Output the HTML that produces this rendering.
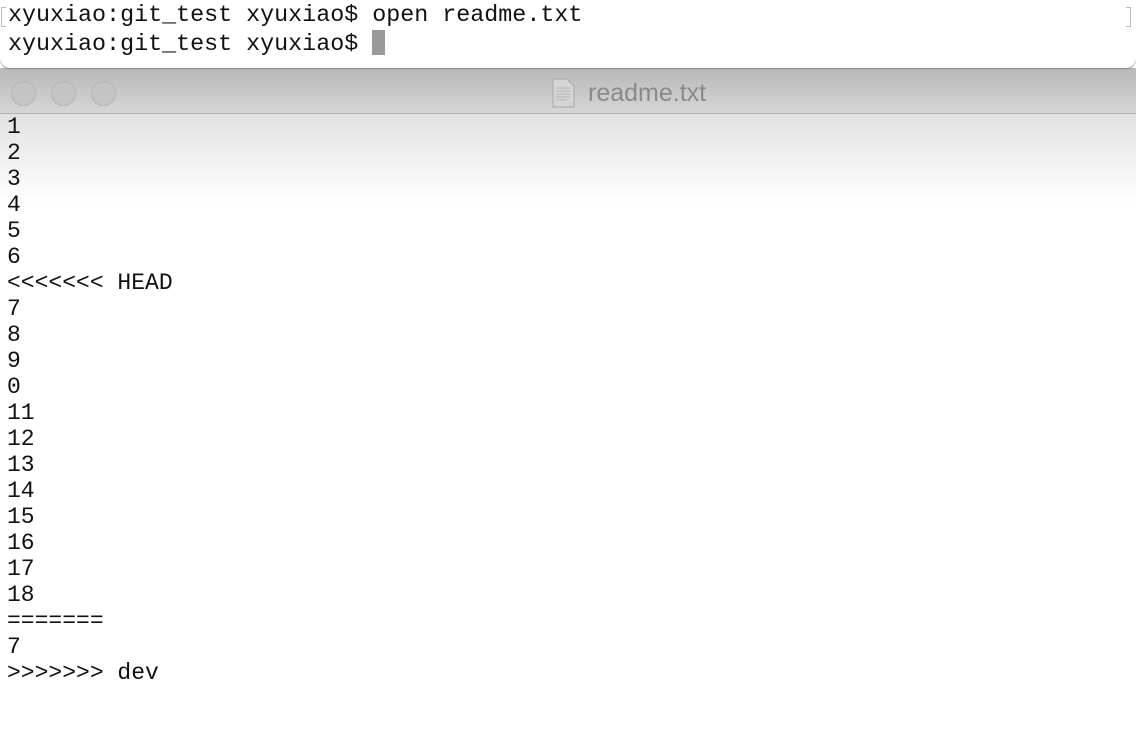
<!DOCTYPE html>
<html><head><meta charset="utf-8"><style>
body{margin:0;width:1136px;height:750px;overflow:hidden;background:#fff;position:relative;font-family:"Liberation Mono","DejaVu Sans Mono",monospace;}
#term{position:absolute;left:0;top:0;width:1136px;height:68px;background:#fff;border-radius:0 0 10px 10px;z-index:3;box-shadow:0 1px 1px #888;}
.tl{position:absolute;left:8px;font-size:23.35px;color:#111;white-space:pre;line-height:27px;}
#bar{position:absolute;left:0;top:68px;width:1136px;height:45px;background:linear-gradient(#b8b8b8,#d6d6d6);border-bottom:1px solid #b5b5b5;z-index:2;}
.c{position:absolute;top:13px;width:23px;height:23px;border-radius:50%;background:#c4c4c4;border:1px solid #b4b4b4;}
#title{position:absolute;left:588px;top:11px;font-family:"Liberation Sans",sans-serif;font-size:25px;color:#8a8a8a;}
#shade{position:absolute;left:0;top:114px;width:1136px;height:90px;background:linear-gradient(#e2e2e2,#fff);}
#txt{position:absolute;left:7px;top:114px;font-size:23px;line-height:26px;color:#111;white-space:pre;}
</style></head><body>
<div id="term">
<div class="tl" style="top:3px">xyuxiao:git_test xyuxiao$ open readme.txt</div>
<div class="tl" style="top:30px">xyuxiao:git_test xyuxiao$ <span style="display:inline-block;width:13px;height:25px;background:#999;vertical-align:-5px"></span></div>
<div style="position:absolute;left:1px;top:7px;width:4px;height:18px;border:1px solid #bbb;border-right:none"></div>
<div style="position:absolute;right:5px;top:7px;width:4px;height:18px;border:1px solid #bbb;border-left:none"></div>
</div>
<div id="bar">
<div class="c" style="left:11px"></div><div class="c" style="left:51px"></div><div class="c" style="left:91px"></div>
<svg style="position:absolute;left:552px;top:10px" width="24" height="30" viewBox="0 0 24 30"><path d="M1 1H15L22 8V29H1Z" fill="#d4d4d4" stroke="#a8a8a8"/><path d="M4 10H18M4 13H18M4 16H18M4 19H18M4 22H15" stroke="#b8b8b8"/></svg>
<div id="title">readme.txt</div>
</div>
<div id="shade"></div>
<div id="txt">1
2
3
4
5
6
&lt;&lt;&lt;&lt;&lt;&lt;&lt; HEAD
7
8
9
0
11
12
13
14
15
16
17
18
=======
7
&gt;&gt;&gt;&gt;&gt;&gt;&gt; dev</div>
</body></html>
